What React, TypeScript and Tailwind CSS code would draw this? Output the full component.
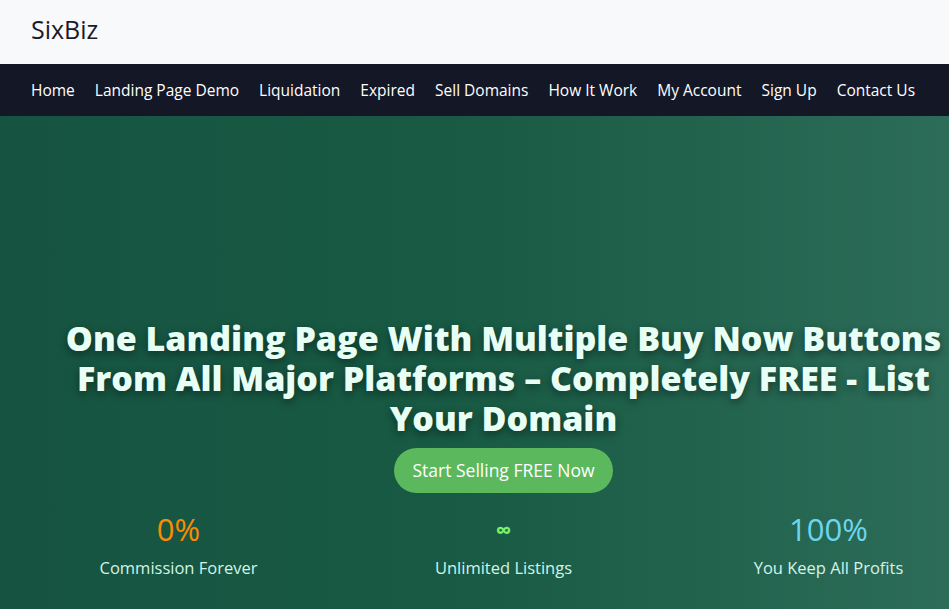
import React from 'react';

const navItems = [
  'Home',
  'Landing Page Demo',
  'Liquidation',
  'Expired',
  'Sell Domains',
  'How It Work',
  'My Account',
  'Sign Up',
  'Contact Us',
];

const headline = [
  'One Landing Page With Multiple Buy Now Buttons',
  'From All Major Platforms – Completely FREE - List',
  'Your Domain',
];

const stats = [
  { value: '0%', label: 'Commission Forever', color: 'text-[#fb8c00]', size: 'text-[31px]' },
  { value: '∞', label: 'Unlimited Listings', color: 'text-[#7af06a]', size: 'text-[22px] font-bold' },
  { value: '100%', label: 'You Keep All Profits', color: 'text-[#6cd6ef]', size: 'text-[31px]' },
];

const App: React.FC = () => {
  return (
    <div className="min-h-[609px] overflow-hidden font-['Open_Sans','Noto_Sans',sans-serif]">
      <header className="h-16 bg-[#f8f9fa] flex items-center px-[31px] pb-[7px]">
        <span className="text-[25px] leading-[30px] text-[#1a1a2a]">SixBiz</span>
      </header>

      <nav className="h-[52px] bg-[#141726] flex items-center gap-5 px-[31px] pt-[1px]">
        {navItems.map((item) => (
          <a key={item} href="#" className="text-[15.5px] text-white whitespace-nowrap">
            {item}
          </a>
        ))}
      </nav>

      <section className="h-[493px] bg-[linear-gradient(to_right,#165441_0%,#185a44_48%,#2c6c58_100%)]">
        <div className="w-[975px] ml-[16px] pt-[202px] flex flex-col items-center">
          <h1 className="flex flex-col items-center text-center text-[34px] font-extrabold text-[#e8fff5] whitespace-nowrap [text-shadow:0_3px_8px_rgba(0,0,0,0.45)]">
            {headline.map((line) => (
              <span key={line} className="block h-[40px] leading-[40px] overflow-visible">
                {line}
              </span>
            ))}
          </h1>

          <button className="mt-[10px] h-[45px] px-[18px] rounded-full bg-[#5cb85c] text-white text-[17.5px]">
            Start Selling FREE Now
          </button>

          <div className="w-full grid grid-cols-3 mt-[19px]">
            {stats.map((s) => (
              <div key={s.label} className="flex flex-col items-center">
                <div className={`h-[34px] flex items-center ${s.size} ${s.color}`}>{s.value}</div>
                <div className="mt-[10px] text-[16.5px] text-[#d3f3e8]">{s.label}</div>
              </div>
            ))}
          </div>
        </div>
      </section>
    </div>
  );
};

export default App;
